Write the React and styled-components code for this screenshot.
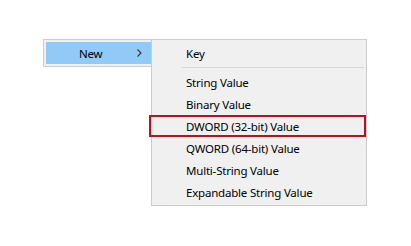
import styled, { createGlobalStyle } from "styled-components";

const GlobalStyle = createGlobalStyle`
  html, body {
    margin: 0;
    padding: 0;
    background: #ffffff;
  }
  body {
    font-family: "Noto Sans", "Open Sans", sans-serif;
    font-size: 11.5px;
    letter-spacing: -0.2px;
    color: #000000;
  }
`;

const Stage = styled.div`
  display: flex;
  align-items: flex-start;
  padding: 39px 0 0 43px;
  height: 246px;
  box-sizing: border-box;
`;

const ParentMenu = styled.div`
  width: 112px;
  box-sizing: border-box;
  background: #f0f0f0;
  border: 1px solid #cccccc;
  padding: 2px;
`;

const ParentItem = styled.div`
  display: flex;
  align-items: center;
  height: 22px;
  background: #91c9f7;
  padding-left: 33px;
  padding-right: 8px;
`;

const Label = styled.span`
  flex: 1;
  white-space: nowrap;
`;

const Chevron = styled.svg`
  width: 5px;
  height: 8px;
  margin-right: 2px;
`;

const SubMenu = styled.div`
  position: relative;
  z-index: 1;
  margin-left: -4px;
  width: 216px;
  box-sizing: border-box;
  background: #f0f0f0;
  border: 1px solid #cccccc;
  padding: 2px 0;
`;

const Item = styled.div`
  position: relative;
  height: 22px;
  display: flex;
  align-items: center;
  padding-left: 34px;
  white-space: nowrap;

  ${({ $marked }) =>
    $marked &&
    `
    &::after {
      content: "";
      position: absolute;
      left: -3px;
      right: 0;
      top: 0;
      bottom: 0;
      border: 2px solid #b5141e;
    }
  `}
`;

const Separator = styled.div`
  height: 7px;
  display: flex;
  align-items: center;
  padding-left: 30px;
  padding-right: 2px;

  &::before {
    content: "";
    flex: 1;
    height: 1px;
    background: #d7d7d7;
  }
`;

const items = [
  "String Value",
  "Binary Value",
  "DWORD (32-bit) Value",
  "QWORD (64-bit) Value",
  "Multi-String Value",
  "Expandable String Value",
];

export default function App() {
  return (
    <>
      <GlobalStyle />
      <Stage>
        <ParentMenu>
          <ParentItem>
            <Label>New</Label>
            <Chevron viewBox="0 0 5 8">
              <path d="M0.5 0.5 L4 4 L0.5 7.5" fill="none" stroke="#333" strokeWidth="1.1" />
            </Chevron>
          </ParentItem>
        </ParentMenu>
        <SubMenu>
          <Item>Key</Item>
          <Separator />
          {items.map((text) => (
            <Item key={text} $marked={text.startsWith("DWORD")}>
              {text}
            </Item>
          ))}
        </SubMenu>
      </Stage>
    </>
  );
}
